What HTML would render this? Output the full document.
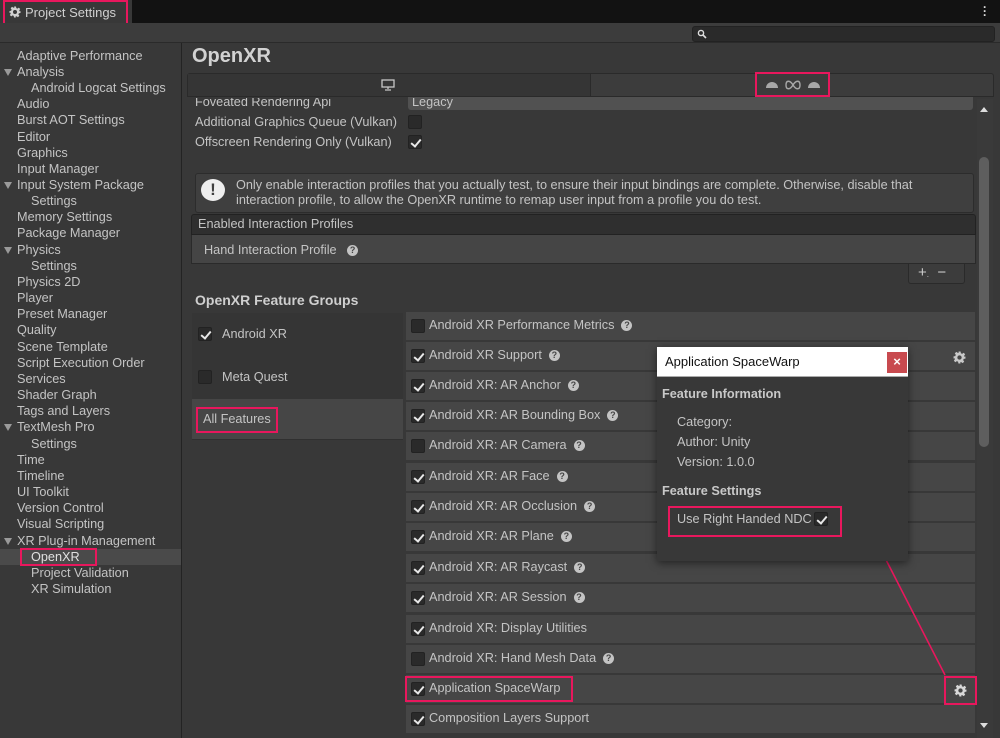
<!DOCTYPE html>
<html><head><style>
*{box-sizing:border-box;margin:0;padding:0}
body{width:1000px;height:738px;background:#383838;font-family:"Liberation Sans",sans-serif;color:#c4c4c4;font-size:12.7px;position:relative;overflow:hidden}
.a{position:absolute}
.pk{position:absolute;border:2px solid #e8175d}
.side div{position:absolute;left:17px;white-space:nowrap;height:16px;line-height:16px}
.side .s{left:31px}
.tri{position:absolute;left:4px;width:0;height:0;border-left:4px solid transparent;border-right:4px solid transparent;border-top:7px solid #9a9a9a}
.cb{position:absolute;width:14px;height:14px;background:#2a2a2a;border:1px solid #222;border-radius:2px}
.cb.c::after{content:"";position:absolute;left:4px;top:1px;width:4px;height:8px;border:solid #e8e8e8;border-width:0 2px 2px 0;transform:rotate(40deg)}
.row{position:absolute;left:406px;width:569px;height:28px;background:#464646}
.row span.t{position:absolute;left:23px;top:6px;white-space:nowrap}
.row .cb{left:5px;top:7px}
.q{display:inline-block;width:11px;height:11px;border-radius:50%;background:#c4c4c4;color:#464646;font-size:9px;font-weight:bold;text-align:center;line-height:11px;margin-left:7px;vertical-align:1px}
</style></head><body>
<div class="a" style="left:0;top:0;width:1000px;height:23px;background:#121212"></div>
<div class="a" style="left:0;top:0;width:132px;height:24px;background:#383838"></div>
<div class="pk" style="left:3px;top:0;width:125px;height:29px"></div>
<svg class="a" style="left:9px;top:6px" width="12" height="12" viewBox="0 0 24 24"><path fill="#d0d0d0" d="M10 1h4l.6 3.2 2.3 1 2.7-1.9 2.8 2.8-1.9 2.7 1 2.3L23 10v4l-3.2.6-1 2.3 1.9 2.7-2.8 2.8-2.7-1.9-2.3 1L14 23h-4l-.6-3.2-2.3-1-2.7 1.9-2.8-2.8 1.9-2.7-1-2.3L1 14v-4l3.2-.6 1-2.3-1.9-2.7 2.8-2.8 2.7 1.9 2.3-1zM12 8a4 4 0 1 0 0 8 4 4 0 0 0 0-8z"/></svg>
<div class="a" style="left:25px;top:5px;font-size:13px;color:#d0d0d0">Project Settings</div>
<div class="a" style="left:983px;top:5px;color:#ddd;font-weight:bold;font-size:12px;line-height:4px">·<br>·<br>·</div>
<div class="a" style="left:0;top:23px;width:1000px;height:20px;background:#3c3c3c;border-bottom:1px solid #2a2a2a"></div>
<div class="a" style="left:692px;top:26px;width:303px;height:16px;background:#2a2a2a;border:1px solid #222;border-radius:3px"></div>
<svg class="a" style="left:697px;top:29px" width="10" height="10"><circle cx="4" cy="4" r="2.6" fill="none" stroke="#ddd" stroke-width="1.4"/><path d="M6 6l3 3" stroke="#ddd" stroke-width="1.6"/></svg>
<div class="a" style="left:181px;top:43px;width:1px;height:695px;background:#232323"></div>
<div class="a" style="left:0;top:549px;width:181px;height:16px;background:#4a4a4a"></div>
<div class="side a" style="left:0;top:0">
<div style="top:48px">Adaptive Performance</div>
<i class="tri" style="top:69px"></i><div style="top:64px">Analysis</div>
<div class="s" style="top:80px">Android Logcat Settings</div>
<div style="top:96px">Audio</div>
<div style="top:112px">Burst AOT Settings</div>
<div style="top:129px">Editor</div>
<div style="top:145px">Graphics</div>
<div style="top:161px">Input Manager</div>
<i class="tri" style="top:182px"></i><div style="top:177px">Input System Package</div>
<div class="s" style="top:193px">Settings</div>
<div style="top:209px">Memory Settings</div>
<div style="top:225px">Package Manager</div>
<i class="tri" style="top:247px"></i><div style="top:242px">Physics</div>
<div class="s" style="top:258px">Settings</div>
<div style="top:274px">Physics 2D</div>
<div style="top:290px">Player</div>
<div style="top:306px">Preset Manager</div>
<div style="top:322px">Quality</div>
<div style="top:339px">Scene Template</div>
<div style="top:355px">Script Execution Order</div>
<div style="top:371px">Services</div>
<div style="top:387px">Shader Graph</div>
<div style="top:403px">Tags and Layers</div>
<i class="tri" style="top:424px"></i><div style="top:419px">TextMesh Pro</div>
<div class="s" style="top:436px">Settings</div>
<div style="top:452px">Time</div>
<div style="top:468px">Timeline</div>
<div style="top:484px">UI Toolkit</div>
<div style="top:500px">Version Control</div>
<div style="top:516px">Visual Scripting</div>
<i class="tri" style="top:538px"></i><div style="top:533px">XR Plug-in Management</div>
<div class="s" style="top:549px;color:#e0e0e0">OpenXR</div>
<div class="s" style="top:565px">Project Validation</div>
<div class="s" style="top:581px">XR Simulation</div>
</div>
<div class="pk" style="left:20px;top:548px;width:77px;height:18px"></div>
<div class="a" style="left:192px;top:45px;font-size:20px;font-weight:bold;color:#d2d2d2">OpenXR</div>
<div class="a" style="left:187px;top:73px;width:807px;height:24px;background:#3c3c3c;border:1px solid #2a2a2a;border-radius:3px 3px 0 0"></div>
<div class="a" style="left:188px;top:74px;width:403px;height:22px;background:#353535;border-right:1px solid #2a2a2a"></div>
<svg class="a" style="left:381px;top:79px" width="14" height="12"><rect x="1" y="1" width="12" height="7" fill="none" stroke="#c8c8c8" stroke-width="1.3"/><path d="M7 8v2M4 11h6" stroke="#c8c8c8" stroke-width="1.3"/></svg>
<svg class="a" style="left:765px;top:79px" width="56" height="12"><path d="M1 9a5 5 0 0 1 12 0z" fill="#a8a8a8"/><path d="M43 9a5 5 0 0 1 12 0z" fill="#a8a8a8"/><path d="M28 6c-3-5-7-5-7 0s4 5 7 0c3-5 7-5 7 0s-4 5-7 0z" fill="none" stroke="#a8a8a8" stroke-width="1.4"/></svg>
<div class="pk" style="left:755px;top:72px;width:75px;height:25px"></div>
<div class="a" style="left:408px;top:97px;width:565px;height:13px;background:#515151;border-radius:0 0 3px 3px"></div>
<div class="a" style="left:195px;top:95px;white-space:nowrap;clip-path:inset(3px 0 0 0)">Foveated Rendering Api</div>
<div class="a" style="left:412px;top:95px;clip-path:inset(3px 0 0 0)">Legacy</div>
<div class="a" style="left:195px;top:115px">Additional Graphics Queue (Vulkan)</div>
<div class="cb" style="left:408px;top:115px"></div>
<div class="a" style="left:195px;top:135px">Offscreen Rendering Only (Vulkan)</div>
<div class="cb c" style="left:408px;top:135px"></div>
<div class="a" style="left:977px;top:99px;width:16px;height:639px;background:#3a3a3a"></div>
<div class="a" style="left:979px;top:157px;width:10px;height:290px;background:#5e5e5e;border-radius:5px"></div>
<div class="a" style="left:980px;top:107px;border-left:4px solid transparent;border-right:4px solid transparent;border-bottom:5px solid #ddd"></div>
<div class="a" style="left:980px;top:723px;border-left:4px solid transparent;border-right:4px solid transparent;border-top:5px solid #ddd"></div>
<div class="a" style="left:195px;top:173px;width:779px;height:40px;background:#3f3f3f;border:1px solid #2c2c2c;border-radius:3px"></div>
<div class="a" style="left:201px;top:179px;width:24px;height:22px;background:#eee;border-radius:50%;color:#3f3f3f;font-weight:bold;font-size:17px;text-align:center;line-height:22px">!</div>
<div class="a" style="left:236px;top:178px;line-height:15px;width:735px">Only enable interaction profiles that you actually test, to ensure their input bindings are complete. Otherwise, disable that interaction profile, to allow the OpenXR runtime to remap user input from a profile you do test.</div>
<div class="a" style="left:191px;top:214px;width:785px;height:21px;background:#2f2f2f;border:1px solid #222;border-radius:3px 3px 0 0"></div>
<div class="a" style="left:198px;top:217px">Enabled Interaction Profiles</div>
<div class="a" style="left:191px;top:235px;width:785px;height:29px;background:#454545;border:1px solid #2a2a2a;border-top:none"></div>
<div class="a" style="left:204px;top:243px">Hand Interaction Profile <span class="q" style="background:#c4c4c4;color:#454545">?</span></div>
<div class="a" style="left:908px;top:264px;width:57px;height:20px;background:#3c3c3c;border:1px solid #2a2a2a;border-top:none;border-radius:0 0 3px 3px"></div>
<div class="a" style="left:918px;top:264px;font-size:15px;color:#ccc">+<span style="font-size:8px">.</span>&nbsp;&nbsp;−</div>
<div class="a" style="left:195px;top:292px;font-size:14px;font-weight:bold;color:#cfcfcf">OpenXR Feature Groups</div>
<div class="a" style="left:192px;top:313px;width:211px;height:86px;background:#353535"></div>
<div class="a" style="left:192px;top:399px;width:211px;height:41px;background:#464646;border-bottom:1px solid #303030"></div>
<div class="cb c" style="left:198px;top:327px"></div>
<div class="a" style="left:222px;top:327px">Android XR</div>
<div class="cb" style="left:198px;top:370px"></div>
<div class="a" style="left:222px;top:370px">Meta Quest</div>
<div class="a" style="left:203px;top:412px">All Features</div>
<div class="pk" style="left:196px;top:407px;width:82px;height:26px"></div>
<div class="row" style="top:312px"><i class="cb"></i><span class="t">Android XR Performance Metrics<span class="q">?</span></span></div>
<div class="row" style="top:342px"><i class="cb c"></i><span class="t">Android XR Support<span class="q">?</span></span></div>
<div class="row" style="top:372px"><i class="cb c"></i><span class="t">Android XR: AR Anchor<span class="q">?</span></span></div>
<div class="row" style="top:402px"><i class="cb c"></i><span class="t">Android XR: AR Bounding Box<span class="q">?</span></span></div>
<div class="row" style="top:432px"><i class="cb"></i><span class="t">Android XR: AR Camera<span class="q">?</span></span></div>
<div class="row" style="top:463px"><i class="cb c"></i><span class="t">Android XR: AR Face<span class="q">?</span></span></div>
<div class="row" style="top:493px"><i class="cb c"></i><span class="t">Android XR: AR Occlusion<span class="q">?</span></span></div>
<div class="row" style="top:523px"><i class="cb c"></i><span class="t">Android XR: AR Plane<span class="q">?</span></span></div>
<div class="row" style="top:554px"><i class="cb c"></i><span class="t">Android XR: AR Raycast<span class="q">?</span></span></div>
<div class="row" style="top:584px"><i class="cb c"></i><span class="t">Android XR: AR Session<span class="q">?</span></span></div>
<div class="row" style="top:615px"><i class="cb c"></i><span class="t">Android XR: Display Utilities</span></div>
<div class="row" style="top:645px"><i class="cb"></i><span class="t">Android XR: Hand Mesh Data<span class="q">?</span></span></div>
<div class="row" style="top:675px"><i class="cb c"></i><span class="t">Application SpaceWarp</span></div>
<div class="row" style="top:705px"><i class="cb c"></i><span class="t">Composition Layers Support</span></div>
<svg class="a" style="left:953px;top:351px" width="13" height="13" viewBox="0 0 24 24"><path fill="#c8c8c8" d="M10 1h4l.6 3.2 2.3 1 2.7-1.9 2.8 2.8-1.9 2.7 1 2.3L23 10v4l-3.2.6-1 2.3 1.9 2.7-2.8 2.8-2.7-1.9-2.3 1L14 23h-4l-.6-3.2-2.3-1-2.7 1.9-2.8-2.8 1.9-2.7-1-2.3L1 14v-4l3.2-.6 1-2.3-1.9-2.7 2.8-2.8 2.7 1.9 2.3-1zM12 8a4 4 0 1 0 0 8 4 4 0 0 0 0-8z"/></svg>
<svg class="a" style="left:954px;top:684px" width="13" height="13" viewBox="0 0 24 24"><path fill="#d8d8d8" d="M10 1h4l.6 3.2 2.3 1 2.7-1.9 2.8 2.8-1.9 2.7 1 2.3L23 10v4l-3.2.6-1 2.3 1.9 2.7-2.8 2.8-2.7-1.9-2.3 1L14 23h-4l-.6-3.2-2.3-1-2.7 1.9-2.8-2.8 1.9-2.7-1-2.3L1 14v-4l3.2-.6 1-2.3-1.9-2.7 2.8-2.8 2.7 1.9 2.3-1zM12 8a4 4 0 1 0 0 8 4 4 0 0 0 0-8z"/></svg>
<div class="pk" style="left:405px;top:676px;width:168px;height:26px"></div>
<div class="pk" style="left:944px;top:676px;width:33px;height:29px"></div>
<svg class="a" style="left:0;top:0" width="1000" height="738"><path d="M945 675L881 550M881 550l-1 11M881 550l8 7" stroke="#e8175d" stroke-width="1.6" fill="none"/></svg>
<div class="a" style="left:657px;top:347px;width:251px;height:214px;background:#383838;box-shadow:0 2px 8px rgba(0,0,0,.5)"></div>
<div class="a" style="left:657px;top:347px;width:251px;height:30px;background:#fff;border-bottom:1px solid #aaa"></div>
<div class="a" style="left:665px;top:354px;color:#111;font-size:13px">Application SpaceWarp</div>
<div class="a" style="left:887px;top:352px;width:20px;height:21px;background:#c84a4f;color:#fff;text-align:center;line-height:20px;font-size:13px;font-weight:bold">×</div>
<div class="a" style="left:662px;top:387px;font-weight:bold;color:#c8c8c8">Feature Information</div>
<div class="a" style="left:677px;top:415px">Category:</div>
<div class="a" style="left:677px;top:435px">Author: Unity</div>
<div class="a" style="left:677px;top:455px">Version: 1.0.0</div>
<div class="a" style="left:662px;top:484px;font-weight:bold;color:#c8c8c8">Feature Settings</div>
<div class="a" style="left:677px;top:512px">Use Right Handed NDC</div>
<div class="cb c" style="left:814px;top:512px"></div>
<div class="pk" style="left:668px;top:506px;width:174px;height:31px"></div>
</body></html>
